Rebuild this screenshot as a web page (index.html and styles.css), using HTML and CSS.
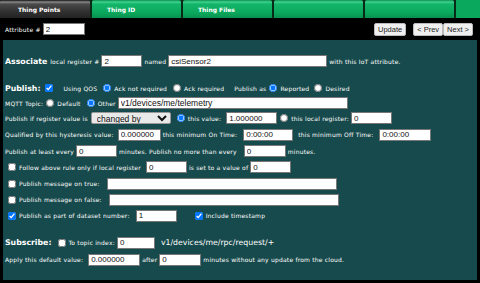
FILE: index.html
```html
<!DOCTYPE html>
<html lang="en">
<head>
    <meta charset="UTF-8">
    <title>Thing Points</title>
    <link rel="stylesheet" href="styles.css">
</head>
<body>
    <div class="tabs">
        <div class="tab active">Thing Points</div>
        <div class="tab">Thing ID</div>
        <div class="tab">Thing Files</div>
        <div class="tab"></div>
        <div class="tab"></div>
        <div class="tab rest"></div>
    </div>

    <div class="toolbar">
        <span class="lbl">Attribute #</span>
        <input class="fld w42" type="text" value="2">
        <div class="spacer"></div>
        <button class="btn">Update</button>
        <button class="btn prev">&lt; Prev</button>
        <button class="btn next">Next &gt;</button>
    </div>

    <div class="panel">
        <div class="row">
            <span class="head">Associate</span>
            <span class="lbl">local register #</span>
            <input class="fld w41" type="text" value="2">
            <span class="lbl">named</span>
            <input class="fld w159" type="text" value="csiSensor2">
            <span class="lbl">with this IoT attribute.</span>
        </div>

        <div class="row tight sect">
            <span class="head">Publish:</span>
            <input class="chk" type="checkbox" checked>
            <span class="lbl ml8">Using QOS</span>
            <input class="rad ml4" type="radio" name="qos" checked>
            <span class="lbl">Ack not required</span>
            <input class="rad ml4" type="radio" name="qos">
            <span class="lbl">Ack required</span>
            <span class="lbl ml8">Publish as</span>
            <input class="rad" type="radio" name="as" checked>
            <span class="lbl">Reported</span>
            <input class="rad ml3" type="radio" name="as">
            <span class="lbl">Desired</span>
        </div>

        <div class="row tight">
            <span class="lbl">MQTT Topic:</span>
            <input class="rad" type="radio" name="topic">
            <span class="lbl">Default</span>
            <input class="rad ml4" type="radio" name="topic" checked>
            <span class="lbl">Other</span>
            <input class="fld big w230" type="text" value="v1/devices/me/telemetry">
        </div>

        <div class="row tight">
            <span class="lbl">Publish if register value is</span>
            <select class="sel">
                <option>changed by</option>
            </select>
            <input class="rad ml4" type="radio" name="cmp" checked>
            <span class="lbl">this value:</span>
            <input class="fld w51 ml3" type="text" value="1.000000">
            <input class="rad" type="radio" name="cmp">
            <span class="lbl">this local register:</span>
            <input class="fld w41" type="text" value="0">
        </div>

        <div class="row first">
            <span class="lbl">Qualified by this hysteresis value:</span>
            <input class="fld w43 ml2" type="text" value="0.000000">
            <span class="lbl">this minimum On Time:</span>
            <input class="fld w50 ml4" type="text" value="0:00:00">
            <span class="lbl ml3">this minimum Off Time:</span>
            <input class="fld w52 ml4" type="text" value="0:00:00">
        </div>

        <div class="row mid">
            <span class="lbl">Publish at least every</span>
            <input class="fld w41" type="text" value="0">
            <span class="lbl">minutes. Publish no more than every</span>
            <input class="fld w42 ml5" type="text" value="0">
            <span class="lbl">minutes.</span>
        </div>

        <div class="row mid">
            <input class="chk ml3" type="checkbox">
            <span class="lbl">Follow above rule only if local register</span>
            <input class="fld w41 ml3" type="text" value="0">
            <span class="lbl">is set to a value of</span>
            <input class="fld w41" type="text" value="0">
        </div>

        <div class="row mid">
            <input class="chk ml3" type="checkbox">
            <span class="lbl">Publish message on true:</span>
            <input class="fld w230 ml5" type="text">
        </div>

        <div class="row mid">
            <input class="chk ml3" type="checkbox">
            <span class="lbl">Publish message on false:</span>
            <input class="fld w230 ml5" type="text">
        </div>

        <div class="row mid">
            <input class="chk ml3" type="checkbox" checked>
            <span class="lbl">Publish as part of dataset number:</span>
            <input class="fld w41 ml4" type="text" value="1">
            <input class="chk ml16" type="checkbox" checked>
            <span class="lbl">Include timestamp</span>
        </div>

        <div class="row sub">
            <span class="head">Subscribe:</span>
            <input class="chk ml3" type="checkbox">
            <span class="lbl">To topic index:</span>
            <input class="fld w38" type="text" value="0">
            <span class="topic ml4">v1/devices/me/rpc/request/+</span>
        </div>

        <div class="row">
            <span class="lbl">Apply this default value:</span>
            <input class="fld w52 ml3" type="text" value="0.000000">
            <span class="lbl">after</span>
            <input class="fld w42" type="text" value="0">
            <span class="lbl">minutes without any update from the cloud.</span>
        </div>
    </div>
</body>
</html>
```

FILE: styles.css
```css
body {
    margin: 0;
    background: #000;
    font-family: "DejaVu Sans", Verdana, sans-serif;
    color: #fff;
    overflow: hidden;
}
.tabs {
    display: flex;
    gap: 2px;
    height: 18px;
    background: #0a2a18;
}
.tab {
    width: 74px;
    flex: none;
    height: 18px;
    padding-left: 15px;
    font-size: 6px;
    font-weight: bold;
    line-height: 20px;
    color: #fff;
    background: linear-gradient(#0c8e50 0, #3fd48f 2px, #14b56a 4px, #0aa85d 70%, #08914f 100%);
    border-radius: 2px 2px 0 0;
}
.tab.active {
    width: 72px;
    padding-left: 18px;
    background: linear-gradient(#111 0, #8a8a8a 2px, #4a4a4a 4px, #333 60%, #222 100%);
}
.tab.rest {
    flex: 1;
    width: auto;
    padding: 0;
    background: #0aa85d;
    border-radius: 0;
}
.toolbar {
    display: flex;
    align-items: center;
    height: 22px;
    padding: 0 7px 0 5px;
    gap: 2px;
}
.spacer {
    flex: 1;
}
.btn {
    height: 13px;
    padding: 0 3px;
    font-family: "Liberation Sans", Arial, sans-serif;
    font-size: 7.5px;
    color: #222;
    background: #efefef;
    border: 1px solid #bbb;
    border-radius: 2px;
    line-height: 11px;
}
.btn.prev {
    margin-left: 5px;
}
.btn.next {
    margin-left: -2px;
}
.panel {
    margin: 0 3px;
    padding: 13px 2px 12px;
    background: #174a4c;
}
.row {
    display: flex;
    align-items: center;
    gap: 2px;
    height: 16px;
    white-space: nowrap;
}
.row.tight {
    height: 15px;
}
.row.sect {
    margin-top: 11.5px;
}
.row.first {
    margin-top: 1.4px;
    height: 16.2px;
}
.row.mid {
    height: 16.2px;
}
.row.sub {
    margin-top: 10.9px;
    margin-bottom: 1px;
}
.head {
    font-size: 7.8px;
    font-weight: bold;
    margin-right: 1px;
}
.lbl {
    font-size: 6px;
    letter-spacing: 0.2px;
}
.topic {
    font-size: 7.8px;
}
.fld {
    box-sizing: border-box;
    height: 12px;
    margin: 0;
    padding: 0 2px;
    font-family: "Liberation Sans", Arial, sans-serif;
    font-size: 8px;
    color: #111;
    background: #fff;
    border: 1px solid #777;
    border-radius: 0;
    outline: none;
}
.fld.big {
    font-size: 8.5px;
}
.sel {
    box-sizing: border-box;
    width: 80px;
    height: 12px;
    margin: 0 0 0 1px;
    padding: 0 1px;
    font-family: "Liberation Sans", Arial, sans-serif;
    font-size: 8.5px;
    color: #111;
    background: #e9e9e9;
    border: 1px solid #999;
    border-radius: 2px;
}
.chk,
.rad {
    width: 8px;
    height: 8px;
    margin: 0 1px;
    flex: none;
}
.w38 { width: 38px; }
.w41 { width: 41px; }
.w42 { width: 42px; }
.w43 { width: 43px; }
.w50 { width: 50px; }
.w51 { width: 51px; }
.w52 { width: 52px; }
.w159 { width: 159px; }
.w230 { width: 230px; }
.ml2 { margin-left: 2px; }
.ml3 { margin-left: 3px; }
.ml4 { margin-left: 4px; }
.ml5 { margin-left: 5px; }
.ml6 { margin-left: 6px; }
.ml8 { margin-left: 8px; }
.ml16 { margin-left: 16px; }
```
